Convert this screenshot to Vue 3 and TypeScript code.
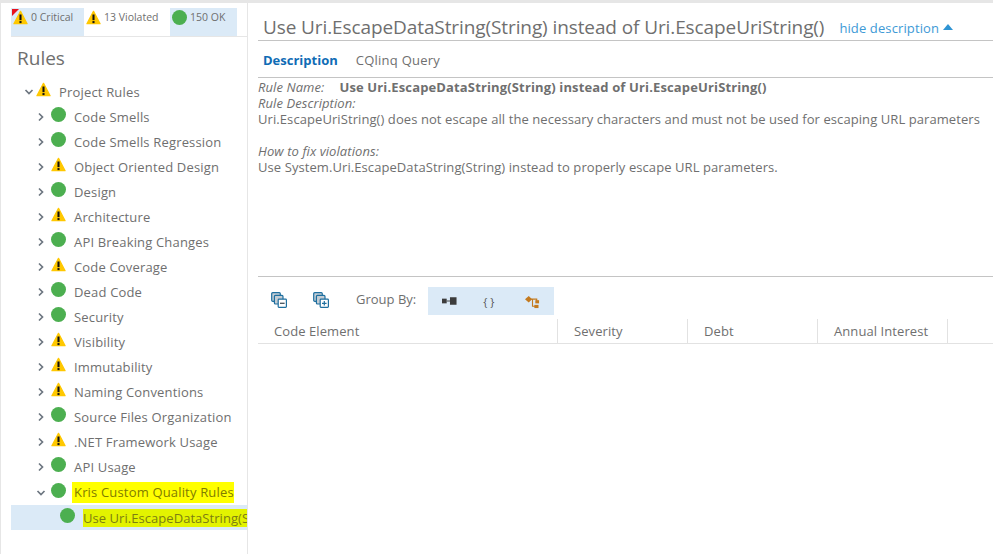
<script setup lang="ts">
type Status = 'warn' | 'ok'
interface Rule { name: string; status: Status }
const rules: Rule[] = [
  { name: 'Code Smells', status: 'ok' },
  { name: 'Code Smells Regression', status: 'ok' },
  { name: 'Object Oriented Design', status: 'warn' },
  { name: 'Design', status: 'ok' },
  { name: 'Architecture', status: 'warn' },
  { name: 'API Breaking Changes', status: 'ok' },
  { name: 'Code Coverage', status: 'warn' },
  { name: 'Dead Code', status: 'ok' },
  { name: 'Security', status: 'ok' },
  { name: 'Visibility', status: 'warn' },
  { name: 'Immutability', status: 'warn' },
  { name: 'Naming Conventions', status: 'warn' },
  { name: 'Source Files Organization', status: 'ok' },
  { name: '.NET Framework Usage', status: 'warn' },
  { name: 'API Usage', status: 'ok' }
]
const columns = [
  { label: 'Code Element', width: 300 },
  { label: 'Severity', width: 130 },
  { label: 'Debt', width: 130 },
  { label: 'Annual Interest', width: 130 }
]
</script>

<template>
  <div class="page">
    <aside class="side">
      <div class="counts">
        <div class="count tinted first">
          <svg class="ico" viewBox="0 0 16 16"><use href="#warn" /></svg>
          <span class="flag"></span>
          <span>0 Critical</span>
        </div>
        <div class="count second">
          <svg class="ico" viewBox="0 0 16 16"><use href="#warn" /></svg>
          <span>13 Violated</span>
        </div>
        <div class="count tinted third">
          <span class="dot"></span>
          <span>150 OK</span>
        </div>
      </div>

      <h2 class="heading">Rules</h2>

      <svg width="0" height="0" class="defs">
        <defs>
          <g id="warn">
            <path d="M8 1.4 15 14.6H1Z" fill="#ffc800" stroke="#ffc800" stroke-width="1.4" stroke-linejoin="round" />
            <rect x="6.9" y="4.8" width="2.2" height="6" fill="#111" />
            <rect x="6.9" y="11.8" width="2.2" height="2.2" fill="#111" />
          </g>
        </defs>
      </svg>

      <div class="row root">
        <svg class="chev" viewBox="0 0 10 10"><path d="M1.5 3 5 6.5 8.5 3" /></svg>
        <svg class="ico lift" viewBox="0 0 16 16"><use href="#warn" /></svg>
        <span class="label">Project Rules</span>
      </div>

      <div v-for="r in rules" :key="r.name" class="row child">
        <svg class="chev" viewBox="0 0 10 10"><path d="M3 1.5 6.5 5 3 8.5" /></svg>
        <svg v-if="r.status === 'warn'" class="ico lift" viewBox="0 0 16 16"><use href="#warn" /></svg>
        <span v-else class="dot lift"></span>
        <span class="label">{{ r.name }}</span>
      </div>

      <div class="row child kris">
        <svg class="chev" viewBox="0 0 10 10"><path d="M1.5 3 5 6.5 8.5 3" /></svg>
        <span class="dot lift"></span>
        <span class="label mark-a">Kris Custom Quality Rules</span>
      </div>
      <div class="row leaf">
        <span class="dot lift"></span>
        <span class="label mark-b">Use Uri.EscapeDataString(String) instead of Uri.EscapeUriString()</span>
      </div>
    </aside>

    <main class="main">
      <header class="title-row">
        <h1 class="title">Use Uri.EscapeDataString(String) instead of Uri.EscapeUriString()</h1>
        <a class="hide">hide description</a>
        <span class="caret"></span>
      </header>

      <nav class="tabs">
        <span class="tab active">Description</span>
        <span class="tab">CQlinq Query</span>
      </nav>

      <section class="desc">
        <p><em class="name-key">Rule Name:</em><strong>Use Uri.EscapeDataString(String) instead of Uri.EscapeUriString()</strong></p>
        <p><em>Rule Description:</em></p>
        <p>Uri.EscapeUriString() does not escape all the necessary characters and must not be used for escaping URL parameters</p>
        <p class="gap"><em>How to fix violations:</em></p>
        <p>Use System.Uri.EscapeDataString(String) instead to properly escape URL parameters.</p>
      </section>

      <div class="toolbar">
        <svg class="tool" viewBox="0 0 16 16">
          <rect x=".7" y=".7" width="8.6" height="8.6" rx="1" fill="#c4cdd4" stroke="#1f6f9f" stroke-width="1.2" />
          <rect x="3.4" y="3.4" width="8.6" height="8.6" rx="1" fill="#c4cdd4" stroke="#1f6f9f" stroke-width="1.2" />
          <rect x="7.2" y="7.2" width="8.2" height="8.2" rx=".8" fill="#fff" stroke="#1f6f9f" stroke-width="1.2" />
          <path d="M9 11.3h4.6" stroke="#44525c" stroke-width="1.3" />
        </svg>
        <svg class="tool second-tool" viewBox="0 0 16 16">
          <rect x=".7" y=".7" width="8.6" height="8.6" rx="1" fill="#c4cdd4" stroke="#1f6f9f" stroke-width="1.2" />
          <rect x="3.4" y="3.4" width="8.6" height="8.6" rx="1" fill="#c4cdd4" stroke="#1f6f9f" stroke-width="1.2" />
          <rect x="7.2" y="7.2" width="8.2" height="8.2" rx=".8" fill="#fff" stroke="#1f6f9f" stroke-width="1.2" />
          <path d="M9 11.3h4.6M11.3 9v4.6" stroke="#1f6f9f" stroke-width="1.2" />
        </svg>
        <span class="group-label">Group By:</span>
        <div class="group">
          <svg class="g1" viewBox="0 0 16 8">
            <rect x="0" y="1.5" width="5" height="5" fill="#3c3c3c" />
            <path d="M5 4h4" stroke="#3c3c3c" />
            <rect x="8.5" y="0" width="7" height="8" fill="#3c3c3c" />
          </svg>
          <span class="braces">{ }</span>
          <svg class="g3" viewBox="0 0 16 16">
            <path d="M0 5.5 4 2l3.5 3.5L4 9Z" fill="#c47a1e" />
            <path d="M6 5.5h6.5V8M8 6v7h3" fill="none" stroke="#c47a1e" stroke-width="1.2" />
            <rect x="11" y="6.6" width="4" height="3.4" fill="#c47a1e" />
            <rect x="10" y="11.6" width="4.4" height="3.4" fill="#c47a1e" />
          </svg>
        </div>
      </div>

      <div class="thead">
        <div v-for="c in columns" :key="c.label" class="th" :style="{ width: c.width + 'px' }">{{ c.label }}</div>
      </div>
    </main>
  </div>
</template>

<style>
html, body { margin: 0; background: #fff; }
</style>

<style scoped>
.page {
  display: flex;
  width: 993px;
  height: 554px;
  box-sizing: border-box;
  border-top: 3px solid #e6e6e6;
  overflow: hidden;
  font-family: "Open Sans", "Noto Sans", sans-serif;
  font-size: 13px;
  color: #6f6f6f;
  background: #fff;
}
.defs { position: absolute; }
.side {
  width: 248px;
  flex: none;
  box-sizing: border-box;
  border-left: 1px solid #e6e6e6;
  border-right: 1px solid #e6e6e6;
  padding: 5px 0 0 10px;
  overflow: hidden;
}
.counts {
  display: flex;
  height: 28px;
  border-bottom: 1px solid #e6e6e6;
  font-size: 10.5px;
}
.count {
  position: relative;
  display: flex;
  align-items: flex-start;
  padding-top: 2px;
  padding-left: 2px;
  box-sizing: border-box;
  gap: 3px;
}
.tinted { background: #dbeaf7; }
.first { width: 73px; }
.second { width: 86px; }
.third { width: 67px; }
.flag {
  position: absolute;
  left: 1px;
  top: 1px;
  width: 0;
  height: 0;
  border-top: 7px solid #e8121e;
  border-right: 7px solid transparent;
}
.ico { width: 15px; height: 15px; flex: none; position: relative; }
.count span:not(.dot):not(.flag) { line-height: 14px; }
.dot {
  width: 15px;
  height: 15px;
  border-radius: 50%;
  background: #4caf50;
  flex: none;
}
.heading {
  margin: 8px 0 0 6px;
  font-size: 19px;
  font-weight: 400;
  line-height: 26px;
}
.row {
  display: flex;
  align-items: center;
  height: 25px;
  white-space: nowrap;
  letter-spacing: .17px;
}
.root { margin-top: 8px; padding-left: 13px; }
.root .lift { margin-left: 2px; }
.child { padding-left: 25px; }
.chev {
  width: 10px;
  height: 10px;
  flex: none;
  fill: none;
  stroke: #6d7680;
  stroke-width: 1.7;
}
.lift { margin-bottom: 5px; margin-left: 5px; }
.label { margin-left: 8px; }
.kris { margin-top: 1px; }
.kris .label { margin-left: 6px; padding-left: 2px; }
.mark-a {
  background: #ffff00;
  color: #807c00;
  line-height: 21px;
}
.leaf {
  background: #dbeaf7;
  padding-left: 49px;
  letter-spacing: .05px;
}
.leaf .lift { margin-left: 0; }
.mark-b {
  background: #e3f300;
  color: #7c7e12;
  line-height: 18px;
}
.main {
  flex: 1;
  min-width: 0;
  padding-left: 10px;
}
.title-row {
  display: flex;
  align-items: center;
  height: 38px;
  box-sizing: border-box;
  border-bottom: 1px solid #c4c4c4;
  padding: 10px 0 0 5px;
}
.title {
  margin: 0;
  font-size: 19px;
  font-weight: 400;
  white-space: nowrap;
  letter-spacing: -.1px;
}
.hide {
  margin-left: 15px;
  font-size: 13px;
  color: #3d9ad6;
  padding-top: 2px;
  letter-spacing: .12px;
}
.caret {
  margin-left: 4px;
  margin-top: 1px;
  border: 5px solid transparent;
  border-top: 0;
  border-bottom: 6px solid #2f94d3;
}
.tabs {
  display: flex;
  height: 37px;
  align-items: center;
  box-sizing: border-box;
  border-bottom: 1px solid #c4c4c4;
  padding: 2px 0 0 5px;
  gap: 18px;
}
.tab { font-size: 13px; letter-spacing: .25px; }
.active { color: #0f6cb5; font-weight: 700; letter-spacing: 0; }
.desc {
  height: 199px;
  box-sizing: border-box;
  padding-top: 1px;
  border-bottom: 1px solid #c4c4c4;
  line-height: 16px;
  white-space: nowrap;
  letter-spacing: .08px;
}
.desc p { margin: 0; }
.gap { margin-top: 16px !important; }
.name-key { margin-right: 15px; }
.desc strong { font-weight: 700; letter-spacing: .14px; }
.toolbar {
  display: flex;
  align-items: flex-start;
  height: 42px;
  box-sizing: border-box;
  padding: 10px 0 0 13px;
}
.tool { width: 16px; height: 16px; margin-top: 5px; flex: none; }
.second-tool { margin-left: 26px; }
.group-label { margin-left: 27px; margin-top: 3px; line-height: 18px; }
.group {
  margin-left: 12px;
  width: 126px;
  height: 28px;
  background: #dbeaf7;
  display: flex;
  align-items: center;
  padding-left: 14px;
  box-sizing: border-box;
}
.g1 { width: 15px; height: 8px; }
.braces { margin-left: 26px; font-size: 11px; color: #555; letter-spacing: 0; }
.g3 { width: 15px; height: 15px; margin-left: 31px; }
.thead {
  display: flex;
  height: 25px;
  box-sizing: border-box;
  border-bottom: 1px solid #e2e2e2;
}
.th {
  box-sizing: border-box;
  flex: none;
  padding-left: 16px;
  border-right: 1px solid #e2e2e2;
  line-height: 24px;
  white-space: nowrap;
  letter-spacing: .08px;
}
</style>
